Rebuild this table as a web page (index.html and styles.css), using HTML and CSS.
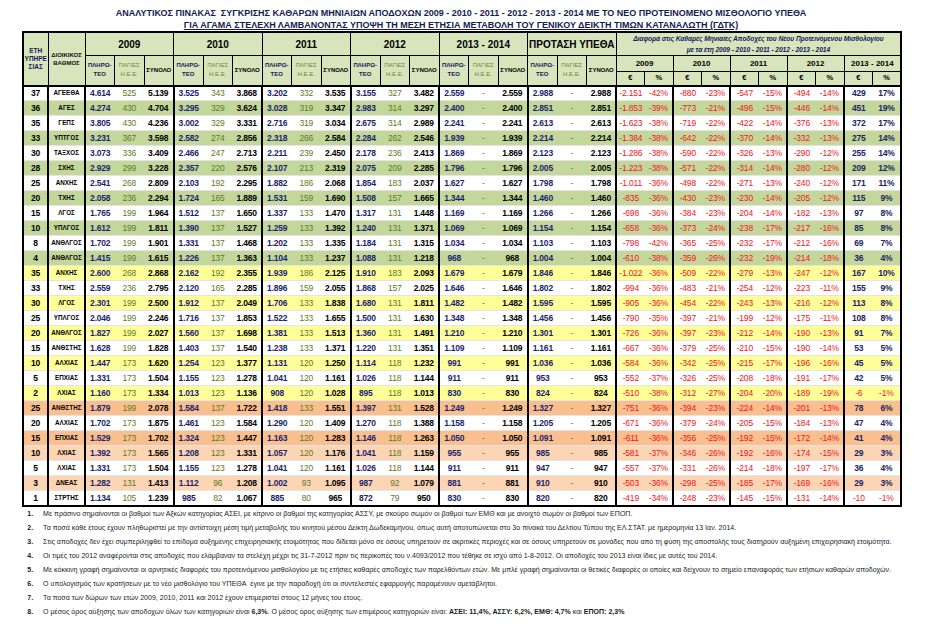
FILE: index.html
```html
<!DOCTYPE html>
<html lang="el">
<head>
<meta charset="utf-8">
<title>Αναλυτικός Πίνακας</title>
<link rel="stylesheet" href="styles.css">
</head>
<body>
<div class="page">
  <div class="title">
    <div>ΑΝΑΛΥΤΙΚΟΣ ΠΙΝΑΚΑΣ&nbsp; ΣΥΓΚΡΙΣΗΣ ΚΑΘΑΡΩΝ ΜΗΝΙΑΙΩΝ ΑΠΟΔΟΧΩΝ 2009 - 2010 - 2011 - 2012 - 2013 - 2014 ΜΕ ΤΟ ΝΕΟ ΠΡΟΤΕΙΝΟΜΕΝΟ ΜΙΣΘΟΛΟΓΙΟ ΥΠΕΘΑ</div>
    <div class="sub">ΓΙΑ ΑΓΑΜΑ ΣΤΕΛΕΧΗ ΛΑΜΒΑΝΟΝΤΑΣ ΥΠΟΨΗ ΤΗ ΜΕΣΗ ΕΤΗΣΙΑ ΜΕΤΑΒΟΛΗ ΤΟΥ ΓΕΝΙΚΟΥ ΔΕΙΚΤΗ ΤΙΜΩΝ ΚΑΤΑΝΑΛΩΤΗ (ΓΔΤΚ)</div>
  </div>
  <table class="grid">
    <colgroup>
      <col class="c-eth"><col class="c-rank">
      <col class="c-y"><col class="c-y"><col class="c-y">
      <col class="c-y"><col class="c-y"><col class="c-y">
      <col class="c-y"><col class="c-y"><col class="c-y">
      <col class="c-y"><col class="c-y"><col class="c-y">
      <col class="c-y"><col class="c-y"><col class="c-y">
      <col class="c-y"><col class="c-y"><col class="c-y">
      <col class="c-d"><col class="c-d"><col class="c-d"><col class="c-d"><col class="c-d">
      <col class="c-d"><col class="c-d"><col class="c-d"><col class="c-d"><col class="c-d">
    </colgroup>
    <thead>
      <tr class="h1">
        <th rowspan="3" class="eth">ΕΤΗ<br>ΥΠΗΡΕ<br>ΣΙΑΣ</th>
        <th rowspan="3" class="rank">ΔΙΟΙΚΙΚΟΣ<br>ΒΑΘΜΟΣ</th>
        <th colspan="3" class="year">2009</th>
        <th colspan="3" class="year">2010</th>
        <th colspan="3" class="year">2011</th>
        <th colspan="3" class="year">2012</th>
        <th colspan="3" class="year">2013 - 2014</th>
        <th colspan="3" class="year">ΠΡΟΤΑΣΗ ΥΠΕΘΑ</th>
        <th colspan="10" class="diff">Διαφορά στις Καθαρές Μηνιαίες Αποδοχές του Νέου Προτεινόμενου Μισθολογίου<br>με τα έτη 2009 - 2010 - 2011 - 2012 - 2013 - 2014</th>
      </tr>
      <tr class="h2">
        <th rowspan="2" class="pl">ΠΛΗΡΩ-<br>ΤΕΟ</th><th rowspan="2" class="pg">ΠΑΓΙΕΣ<br>Η.Ε.Ε.</th><th rowspan="2" class="sn">ΣΥΝΟΛΟ</th>
        <th rowspan="2" class="pl">ΠΛΗΡΩ-<br>ΤΕΟ</th><th rowspan="2" class="pg">ΠΑΓΙΕΣ<br>Η.Ε.Ε.</th><th rowspan="2" class="sn">ΣΥΝΟΛΟ</th>
        <th rowspan="2" class="pl">ΠΛΗΡΩ-<br>ΤΕΟ</th><th rowspan="2" class="pg">ΠΑΓΙΕΣ<br>Η.Ε.Ε.</th><th rowspan="2" class="sn">ΣΥΝΟΛΟ</th>
        <th rowspan="2" class="pl">ΠΛΗΡΩ-<br>ΤΕΟ</th><th rowspan="2" class="pg">ΠΑΓΙΕΣ<br>Η.Ε.Ε.</th><th rowspan="2" class="sn">ΣΥΝΟΛΟ</th>
        <th rowspan="2" class="pl">ΠΛΗΡΩ-<br>ΤΕΟ</th><th rowspan="2" class="pg">ΠΑΓΙΕΣ<br>Η.Ε.Ε.</th><th rowspan="2" class="sn">ΣΥΝΟΛΟ</th>
        <th rowspan="2" class="pl">ΠΛΗΡΩ-<br>ΤΕΟ</th><th rowspan="2" class="pg">ΠΑΓΙΕΣ<br>Η.Ε.Ε.</th><th rowspan="2" class="sn">ΣΥΝΟΛΟ</th>
        <th colspan="2" class="dy">2009</th>
        <th colspan="2" class="dy">2010</th>
        <th colspan="2" class="dy">2011</th>
        <th colspan="2" class="dy">2012</th>
        <th colspan="2" class="dy">2013 - 2014</th>
      </tr>
      <tr class="h3">
        <th class="eu">€</th><th class="pc">%</th>
        <th class="eu">€</th><th class="pc">%</th>
        <th class="eu">€</th><th class="pc">%</th>
        <th class="eu">€</th><th class="pc">%</th>
        <th class="eu">€</th><th class="pc">%</th>
      </tr>
    </thead>
    <tbody>
      <tr class="w"><td>37</td><td>ΑΓΕΕΘΑ</td><td>4.614</td><td>525</td><td>5.139</td><td>3.525</td><td>343</td><td>3.868</td><td>3.202</td><td>332</td><td>3.535</td><td>3.155</td><td>327</td><td>3.482</td><td>2.559</td><td>-</td><td>2.559</td><td>2.988</td><td>-</td><td>2.988</td><td>-2.151</td><td>-42%</td><td>-880</td><td>-23%</td><td>-547</td><td>-15%</td><td>-494</td><td>-14%</td><td>429</td><td>17%</td></tr>
      <tr class="g"><td>36</td><td>ΑΓΕΣ</td><td>4.274</td><td>430</td><td>4.704</td><td>3.295</td><td>329</td><td>3.624</td><td>3.028</td><td>319</td><td>3.347</td><td>2.983</td><td>314</td><td>3.297</td><td>2.400</td><td>-</td><td>2.400</td><td>2.851</td><td>-</td><td>2.851</td><td>-1.853</td><td>-39%</td><td>-773</td><td>-21%</td><td>-496</td><td>-15%</td><td>-446</td><td>-14%</td><td>451</td><td>19%</td></tr>
      <tr class="w"><td>35</td><td>ΓΕΠΣ</td><td>3.805</td><td>430</td><td>4.236</td><td>3.002</td><td>329</td><td>3.331</td><td>2.716</td><td>319</td><td>3.034</td><td>2.675</td><td>314</td><td>2.989</td><td>2.241</td><td>-</td><td>2.241</td><td>2.613</td><td>-</td><td>2.613</td><td>-1.623</td><td>-38%</td><td>-719</td><td>-22%</td><td>-422</td><td>-14%</td><td>-376</td><td>-13%</td><td>372</td><td>17%</td></tr>
      <tr class="g"><td>33</td><td>ΥΠΤΓΟΣ</td><td>3.231</td><td>367</td><td>3.598</td><td>2.582</td><td>274</td><td>2.856</td><td>2.318</td><td>266</td><td>2.584</td><td>2.284</td><td>262</td><td>2.546</td><td>1.939</td><td>-</td><td>1.939</td><td>2.214</td><td>-</td><td>2.214</td><td>-1.384</td><td>-38%</td><td>-642</td><td>-22%</td><td>-370</td><td>-14%</td><td>-332</td><td>-13%</td><td>275</td><td>14%</td></tr>
      <tr class="w"><td>30</td><td>ΤΑΞΧΟΣ</td><td>3.073</td><td>336</td><td>3.409</td><td>2.466</td><td>247</td><td>2.713</td><td>2.211</td><td>239</td><td>2.450</td><td>2.178</td><td>236</td><td>2.413</td><td>1.869</td><td>-</td><td>1.869</td><td>2.123</td><td>-</td><td>2.123</td><td>-1.286</td><td>-38%</td><td>-590</td><td>-22%</td><td>-326</td><td>-13%</td><td>-290</td><td>-12%</td><td>255</td><td>14%</td></tr>
      <tr class="g"><td>28</td><td>ΣΧΗΣ</td><td>2.929</td><td>299</td><td>3.228</td><td>2.357</td><td>220</td><td>2.576</td><td>2.107</td><td>213</td><td>2.319</td><td>2.075</td><td>209</td><td>2.285</td><td>1.796</td><td>-</td><td>1.796</td><td>2.005</td><td>-</td><td>2.005</td><td>-1.223</td><td>-38%</td><td>-571</td><td>-22%</td><td>-314</td><td>-14%</td><td>-280</td><td>-12%</td><td>209</td><td>12%</td></tr>
      <tr class="w"><td>25</td><td>ΑΝΧΗΣ</td><td>2.541</td><td>268</td><td>2.809</td><td>2.103</td><td>192</td><td>2.295</td><td>1.882</td><td>186</td><td>2.068</td><td>1.854</td><td>183</td><td>2.037</td><td>1.627</td><td>-</td><td>1.627</td><td>1.798</td><td>-</td><td>1.798</td><td>-1.011</td><td>-36%</td><td>-498</td><td>-22%</td><td>-271</td><td>-13%</td><td>-240</td><td>-12%</td><td>171</td><td>11%</td></tr>
      <tr class="g"><td>20</td><td>ΤΧΗΣ</td><td>2.058</td><td>236</td><td>2.294</td><td>1.724</td><td>165</td><td>1.889</td><td>1.531</td><td>159</td><td>1.690</td><td>1.508</td><td>157</td><td>1.665</td><td>1.344</td><td>-</td><td>1.344</td><td>1.460</td><td>-</td><td>1.460</td><td>-835</td><td>-36%</td><td>-430</td><td>-23%</td><td>-230</td><td>-14%</td><td>-205</td><td>-12%</td><td>115</td><td>9%</td></tr>
      <tr class="w"><td>15</td><td>ΛΓΟΣ</td><td>1.765</td><td>199</td><td>1.964</td><td>1.512</td><td>137</td><td>1.650</td><td>1.337</td><td>133</td><td>1.470</td><td>1.317</td><td>131</td><td>1.448</td><td>1.169</td><td>-</td><td>1.169</td><td>1.266</td><td>-</td><td>1.266</td><td>-698</td><td>-36%</td><td>-384</td><td>-23%</td><td>-204</td><td>-14%</td><td>-182</td><td>-13%</td><td>97</td><td>8%</td></tr>
      <tr class="g"><td>10</td><td>ΥΠΛΓΟΣ</td><td>1.612</td><td>199</td><td>1.811</td><td>1.390</td><td>137</td><td>1.527</td><td>1.259</td><td>133</td><td>1.392</td><td>1.240</td><td>131</td><td>1.371</td><td>1.069</td><td>-</td><td>1.069</td><td>1.154</td><td>-</td><td>1.154</td><td>-658</td><td>-36%</td><td>-373</td><td>-24%</td><td>-238</td><td>-17%</td><td>-217</td><td>-16%</td><td>85</td><td>8%</td></tr>
      <tr class="w"><td>8</td><td>ΑΝΘΛΓΟΣ</td><td>1.702</td><td>199</td><td>1.901</td><td>1.331</td><td>137</td><td>1.468</td><td>1.202</td><td>133</td><td>1.335</td><td>1.184</td><td>131</td><td>1.315</td><td>1.034</td><td>-</td><td>1.034</td><td>1.103</td><td>-</td><td>1.103</td><td>-798</td><td>-42%</td><td>-365</td><td>-25%</td><td>-232</td><td>-17%</td><td>-212</td><td>-16%</td><td>69</td><td>7%</td></tr>
      <tr class="g"><td>4</td><td>ΑΝΘΛΓΟΣ</td><td>1.415</td><td>199</td><td>1.615</td><td>1.226</td><td>137</td><td>1.363</td><td>1.104</td><td>133</td><td>1.237</td><td>1.088</td><td>131</td><td>1.218</td><td>968</td><td>-</td><td>968</td><td>1.004</td><td>-</td><td>1.004</td><td>-610</td><td>-38%</td><td>-359</td><td>-26%</td><td>-232</td><td>-19%</td><td>-214</td><td>-18%</td><td>36</td><td>4%</td></tr>
      <tr class="y"><td>35</td><td>ΑΝΧΗΣ</td><td>2.600</td><td>268</td><td>2.868</td><td>2.162</td><td>192</td><td>2.355</td><td>1.939</td><td>186</td><td>2.125</td><td>1.910</td><td>183</td><td>2.093</td><td>1.679</td><td>-</td><td>1.679</td><td>1.846</td><td>-</td><td>1.846</td><td>-1.022</td><td>-36%</td><td>-509</td><td>-22%</td><td>-279</td><td>-13%</td><td>-247</td><td>-12%</td><td>167</td><td>10%</td></tr>
      <tr class="w"><td>33</td><td>ΤΧΗΣ</td><td>2.559</td><td>236</td><td>2.795</td><td>2.120</td><td>165</td><td>2.285</td><td>1.896</td><td>159</td><td>2.055</td><td>1.868</td><td>157</td><td>2.025</td><td>1.646</td><td>-</td><td>1.646</td><td>1.802</td><td>-</td><td>1.802</td><td>-994</td><td>-36%</td><td>-483</td><td>-21%</td><td>-254</td><td>-12%</td><td>-223</td><td>-11%</td><td>155</td><td>9%</td></tr>
      <tr class="y"><td>30</td><td>ΛΓΟΣ</td><td>2.301</td><td>199</td><td>2.500</td><td>1.912</td><td>137</td><td>2.049</td><td>1.706</td><td>133</td><td>1.838</td><td>1.680</td><td>131</td><td>1.811</td><td>1.482</td><td>-</td><td>1.482</td><td>1.595</td><td>-</td><td>1.595</td><td>-905</td><td>-36%</td><td>-454</td><td>-22%</td><td>-243</td><td>-13%</td><td>-216</td><td>-12%</td><td>113</td><td>8%</td></tr>
      <tr class="w"><td>25</td><td>ΥΠΛΓΟΣ</td><td>2.046</td><td>199</td><td>2.246</td><td>1.716</td><td>137</td><td>1.853</td><td>1.522</td><td>133</td><td>1.655</td><td>1.500</td><td>131</td><td>1.630</td><td>1.348</td><td>-</td><td>1.348</td><td>1.456</td><td>-</td><td>1.456</td><td>-790</td><td>-35%</td><td>-397</td><td>-21%</td><td>-199</td><td>-12%</td><td>-175</td><td>-11%</td><td>108</td><td>8%</td></tr>
      <tr class="y"><td>20</td><td>ΑΝΘΛΓΟΣ</td><td>1.827</td><td>199</td><td>2.027</td><td>1.560</td><td>137</td><td>1.698</td><td>1.381</td><td>133</td><td>1.513</td><td>1.360</td><td>131</td><td>1.491</td><td>1.210</td><td>-</td><td>1.210</td><td>1.301</td><td>-</td><td>1.301</td><td>-726</td><td>-36%</td><td>-397</td><td>-23%</td><td>-212</td><td>-14%</td><td>-190</td><td>-13%</td><td>91</td><td>7%</td></tr>
      <tr class="w"><td>15</td><td>ΑΝΘΣΤΗΣ</td><td>1.628</td><td>199</td><td>1.828</td><td>1.403</td><td>137</td><td>1.540</td><td>1.238</td><td>133</td><td>1.371</td><td>1.220</td><td>131</td><td>1.351</td><td>1.109</td><td>-</td><td>1.109</td><td>1.161</td><td>-</td><td>1.161</td><td>-667</td><td>-36%</td><td>-379</td><td>-25%</td><td>-210</td><td>-15%</td><td>-190</td><td>-14%</td><td>53</td><td>5%</td></tr>
      <tr class="y"><td>10</td><td>ΑΛΧΙΑΣ</td><td>1.447</td><td>173</td><td>1.620</td><td>1.254</td><td>123</td><td>1.377</td><td>1.131</td><td>120</td><td>1.250</td><td>1.114</td><td>118</td><td>1.232</td><td>991</td><td>-</td><td>991</td><td>1.036</td><td>-</td><td>1.036</td><td>-584</td><td>-36%</td><td>-342</td><td>-25%</td><td>-215</td><td>-17%</td><td>-196</td><td>-16%</td><td>45</td><td>5%</td></tr>
      <tr class="w"><td>5</td><td>ΕΠΧΙΑΣ</td><td>1.331</td><td>173</td><td>1.504</td><td>1.155</td><td>123</td><td>1.278</td><td>1.041</td><td>120</td><td>1.161</td><td>1.026</td><td>118</td><td>1.144</td><td>911</td><td>-</td><td>911</td><td>953</td><td>-</td><td>953</td><td>-552</td><td>-37%</td><td>-326</td><td>-25%</td><td>-208</td><td>-18%</td><td>-191</td><td>-17%</td><td>42</td><td>5%</td></tr>
      <tr class="y"><td>2</td><td>ΛΧΙΑΣ</td><td>1.160</td><td>173</td><td>1.334</td><td>1.013</td><td>123</td><td>1.136</td><td>908</td><td>120</td><td>1.028</td><td>895</td><td>118</td><td>1.013</td><td>830</td><td>-</td><td>830</td><td>824</td><td>-</td><td>824</td><td>-510</td><td>-38%</td><td>-312</td><td>-27%</td><td>-204</td><td>-20%</td><td>-189</td><td>-19%</td><td class="neg">-6</td><td class="neg">-1%</td></tr>
      <tr class="o"><td>25</td><td>ΑΝΘΣΤΗΣ</td><td>1.879</td><td>199</td><td>2.078</td><td>1.584</td><td>137</td><td>1.722</td><td>1.418</td><td>133</td><td>1.551</td><td>1.397</td><td>131</td><td>1.528</td><td>1.249</td><td>-</td><td>1.249</td><td>1.327</td><td>-</td><td>1.327</td><td>-751</td><td>-36%</td><td>-394</td><td>-23%</td><td>-224</td><td>-14%</td><td>-201</td><td>-13%</td><td>78</td><td>6%</td></tr>
      <tr class="w"><td>20</td><td>ΑΛΧΙΑΣ</td><td>1.702</td><td>173</td><td>1.875</td><td>1.461</td><td>123</td><td>1.584</td><td>1.290</td><td>120</td><td>1.409</td><td>1.270</td><td>118</td><td>1.388</td><td>1.158</td><td>-</td><td>1.158</td><td>1.205</td><td>-</td><td>1.205</td><td>-671</td><td>-36%</td><td>-379</td><td>-24%</td><td>-205</td><td>-15%</td><td>-184</td><td>-13%</td><td>47</td><td>4%</td></tr>
      <tr class="o"><td>15</td><td>ΕΠΧΙΑΣ</td><td>1.529</td><td>173</td><td>1.702</td><td>1.324</td><td>123</td><td>1.447</td><td>1.163</td><td>120</td><td>1.283</td><td>1.146</td><td>118</td><td>1.263</td><td>1.050</td><td>-</td><td>1.050</td><td>1.091</td><td>-</td><td>1.091</td><td>-611</td><td>-36%</td><td>-356</td><td>-25%</td><td>-192</td><td>-15%</td><td>-172</td><td>-14%</td><td>41</td><td>4%</td></tr>
      <tr class="p"><td>10</td><td>ΛΧΙΑΣ</td><td>1.392</td><td>173</td><td>1.565</td><td>1.208</td><td>123</td><td>1.331</td><td>1.057</td><td>120</td><td>1.176</td><td>1.041</td><td>118</td><td>1.159</td><td>955</td><td>-</td><td>955</td><td>985</td><td>-</td><td>985</td><td>-581</td><td>-37%</td><td>-346</td><td>-26%</td><td>-192</td><td>-16%</td><td>-174</td><td>-15%</td><td>29</td><td>3%</td></tr>
      <tr class="w"><td>5</td><td>ΛΧΙΑΣ</td><td>1.331</td><td>173</td><td>1.504</td><td>1.155</td><td>123</td><td>1.278</td><td>1.041</td><td>120</td><td>1.161</td><td>1.026</td><td>118</td><td>1.144</td><td>911</td><td>-</td><td>911</td><td>947</td><td>-</td><td>947</td><td>-557</td><td>-37%</td><td>-331</td><td>-26%</td><td>-214</td><td>-18%</td><td>-197</td><td>-17%</td><td>36</td><td>4%</td></tr>
      <tr class="p"><td>3</td><td>ΔΝΕΑΣ</td><td>1.282</td><td>131</td><td>1.413</td><td>1.112</td><td>96</td><td>1.208</td><td>1.002</td><td>93</td><td>1.095</td><td>987</td><td>92</td><td>1.079</td><td>881</td><td>-</td><td>881</td><td>910</td><td>-</td><td>910</td><td>-503</td><td>-36%</td><td>-298</td><td>-25%</td><td>-185</td><td>-17%</td><td>-169</td><td>-16%</td><td>29</td><td>3%</td></tr>
      <tr class="w"><td>1</td><td>ΣΤΡΤΗΣ</td><td>1.134</td><td>105</td><td>1.239</td><td>985</td><td>82</td><td>1.067</td><td>885</td><td>80</td><td>965</td><td>872</td><td>79</td><td>950</td><td>830</td><td>-</td><td>830</td><td>820</td><td>-</td><td>820</td><td>-419</td><td>-34%</td><td>-248</td><td>-23%</td><td>-145</td><td>-15%</td><td>-131</td><td>-14%</td><td class="neg">-10</td><td class="neg">-1%</td></tr>
    </tbody>
  </table>
  <ol class="notes">
    <li><b class="n">1.</b><span>Με πράσινο σημαίνονται οι βαθμοί των Αξκών κατηγορίας ΑΣΕΙ, με κίτρινο οι βαθμοί της κατηγορίας ΑΣΣΥ, με σκούρο σωμόν οι βαθμοί των ΕΜΘ και με ανοιχτό σωμόν οι βαθμοί των ΕΠΟΠ.</span></li>
    <li><b class="n">2.</b><span>Τα ποσά κάθε έτους έχουν πληθωριστεί με την αντίστοιχη μέση τιμή μεταβολής του κινητού μέσου Δείκτη Δωδεκαμήνου, όπως αυτή αποτυπώνεται στο 3ο πίνακα του Δελτίου Τύπου της ΕΛ.ΣΤΑΤ. με ημερομηνία 13 Ιαν. 2014.</span></li>
    <li><b class="n">3.</b><span>Στις αποδοχές δεν έχει συμπεριληφθεί το επίδομα αυξημένης επιχειρησιακής ετοιμότητας που δίδεται μόνο σε όσους υπηρετούν σε ακριτικές περιοχές και σε όσους υπηρετούν σε μονάδες που από τη φύση της αποστολής τους διατηρούν αυξημένη επιχειρησιακή ετοιμότητα.</span></li>
    <li><b class="n">4.</b><span>Οι τιμές του 2012 αναφέρονται στις αποδοχές που ελάμβαναν τα στελέχη μέχρι τις 31-7-2012 πριν τις περικοπές του ν.4093/2012 που τέθηκε σε ισχύ από 1-8-2012. Οι αποδοχές του 2013 είναι ίδιες με αυτές του 2014.</span></li>
    <li><b class="n">5.</b><span>Με κόκκινη γραφή σημαίνονται οι αρνητικές διαφορές του προτεινόμενου μισθολογίου με τις ετήσιες καθαρές αποδοχές των παρελθόντων ετών. Με μπλέ γραφή σημαίνονται οι θετικές διαφορές οι οποίες και δείχνουν το σημείο επαναφοράς των ετήσιων καθαρών αποδοχών.</span></li>
    <li><b class="n">6.</b><span>Ο υπολογισμός των κρατήσεων με το νέο μισθολόγιο του ΥΠΕΘΑ&nbsp; έγινε με την παραδοχή ότι οι συντελεστές εφαρμογής παραμένουν αμετάβλητοι.</span></li>
    <li><b class="n">7.</b><span>Τα ποσά των δώρων των ετών 2009, 2010, 2011 και 2012 έχουν επιμεριστεί στους 12 μήνες του έτους.</span></li>
    <li><b class="n">8.</b><span>Ο μέσος όρος αύξησης των αποδοχών όλων των κατηγοριών είναι <b>6,3%</b>. Ο μέσος όρος αύξησης των επιμέρους κατηγοριών είναι: <b>ΑΣΕΙ: 11,4%, ΑΣΣΥ: 6,2%, ΕΜΘ: 4,7%</b> και <b>ΕΠΟΠ: 2,3%</b></span></li>
  </ol>
</div>
</body>
</html>
```
FILE: styles.css
```css
* { box-sizing: border-box; }
html, body { margin: 0; padding: 0; background: #fff; overflow: hidden; }
body {
  font-family: "Liberation Sans", Arial, sans-serif;
  color: #000;
}
.page { width: 931px; padding: 7px 0 0 22px; }

.title {
  width: 878px;
  text-align: center;
  font-weight: bold;
  font-size: 9px;
  line-height: 12px;
  color: #141c52;
  white-space: nowrap;
}
.title .sub { text-decoration: underline; }

table.grid {
  border-collapse: collapse;
  table-layout: fixed;
  width: 878px;
  border: 2px solid #000;
}
.c-eth { width: 25px; }
.c-rank { width: 37px; }
.c-y { width: 29.5px; }
.c-d { width: 28.5px; }

th {
  background: #d8e4bc;
  border: 1px solid #000;
  padding: 0;
  font-weight: bold;
  font-size: 7px;
  line-height: 8px;
  text-align: center;
  vertical-align: middle;
  color: #000;
  overflow: hidden;
  white-space: nowrap;
}
tr.h1 { height: 23px; }
tr.h2 { height: 16px; }
tr.h3 { height: 14px; }
th.eth { color: #17205e; font-size: 6.5px; }
th.rank { font-size: 6px; color: #111; }
th.year { font-size: 10px; line-height: 11px; }
th.diff { font-style: italic; font-size: 6.7px; line-height: 11px; color: #17205e; letter-spacing: -0.1px; }
th.pl { color: #17205e; font-size: 6px; line-height: 9px; }
th.pg { color: #6b8a2c; font-weight: normal; font-size: 6px; line-height: 9px; }
th.sn { font-size: 6px; }
th.dy { font-size: 8px; }
th.eu, th.pc { font-size: 7.5px; }
thead tr.h2 th[rowspan], thead tr.h3 th { border-bottom: 2px solid #000; }
th.eth, th.rank { border-bottom: 2px solid #000; }

td {
  height: 15px;
  padding: 0;
  text-align: center;
  vertical-align: middle;
  font-size: 8.5px;
  line-height: 12px;
  font-weight: bold;
  letter-spacing: -0.2px;
  white-space: nowrap;
  overflow: hidden;
  border-bottom: 1px solid #e4e4e4;
  color: #000;
}
td:nth-child(2) { font-size: 6.3px; letter-spacing: 0; }

/* ΠΛΗΡΩΤΕΟ */
td:nth-child(3), td:nth-child(6), td:nth-child(9),
td:nth-child(12), td:nth-child(15), td:nth-child(18) { color: #1b1f6e; }
/* ΠΑΓΙΕΣ */
td:nth-child(4), td:nth-child(7), td:nth-child(10),
td:nth-child(13), td:nth-child(16), td:nth-child(19) { color: #5d7a24; font-weight: normal; }
/* διαφορές */
td:nth-child(n+21) { color: #f2141c; font-weight: normal; }
td:nth-child(n+29) { color: #1b2466; font-weight: bold; }
td.neg { color: #f2141c; font-weight: normal; }

/* διαχωριστικά ομάδων */
td:nth-child(2), td:nth-child(3), td:nth-child(6), td:nth-child(9),
td:nth-child(12), td:nth-child(15), td:nth-child(18),
td:nth-child(21), td:nth-child(23), td:nth-child(25), td:nth-child(27), td:nth-child(29) {
  border-left: 2px solid #000;
}

tr.w td { background: #fff; }
tr.g td { background: #c4d79b; }
tr.y td { background: #ffff99; }
tr.o td { background: #fabf8f; }
tr.p td { background: #fcd5b4; }

.notes {
  list-style: none;
  margin: 0;
  padding: 0 0 0 6px;
  font-size: 8px;
  line-height: 14px;
  color: #1a1a1a;
  white-space: nowrap;
  width: 1000px;
  transform: scaleX(0.88);
  transform-origin: 0 0;
}
.notes li { display: flex; }
.notes .n { width: 18px; flex: none; }
```
